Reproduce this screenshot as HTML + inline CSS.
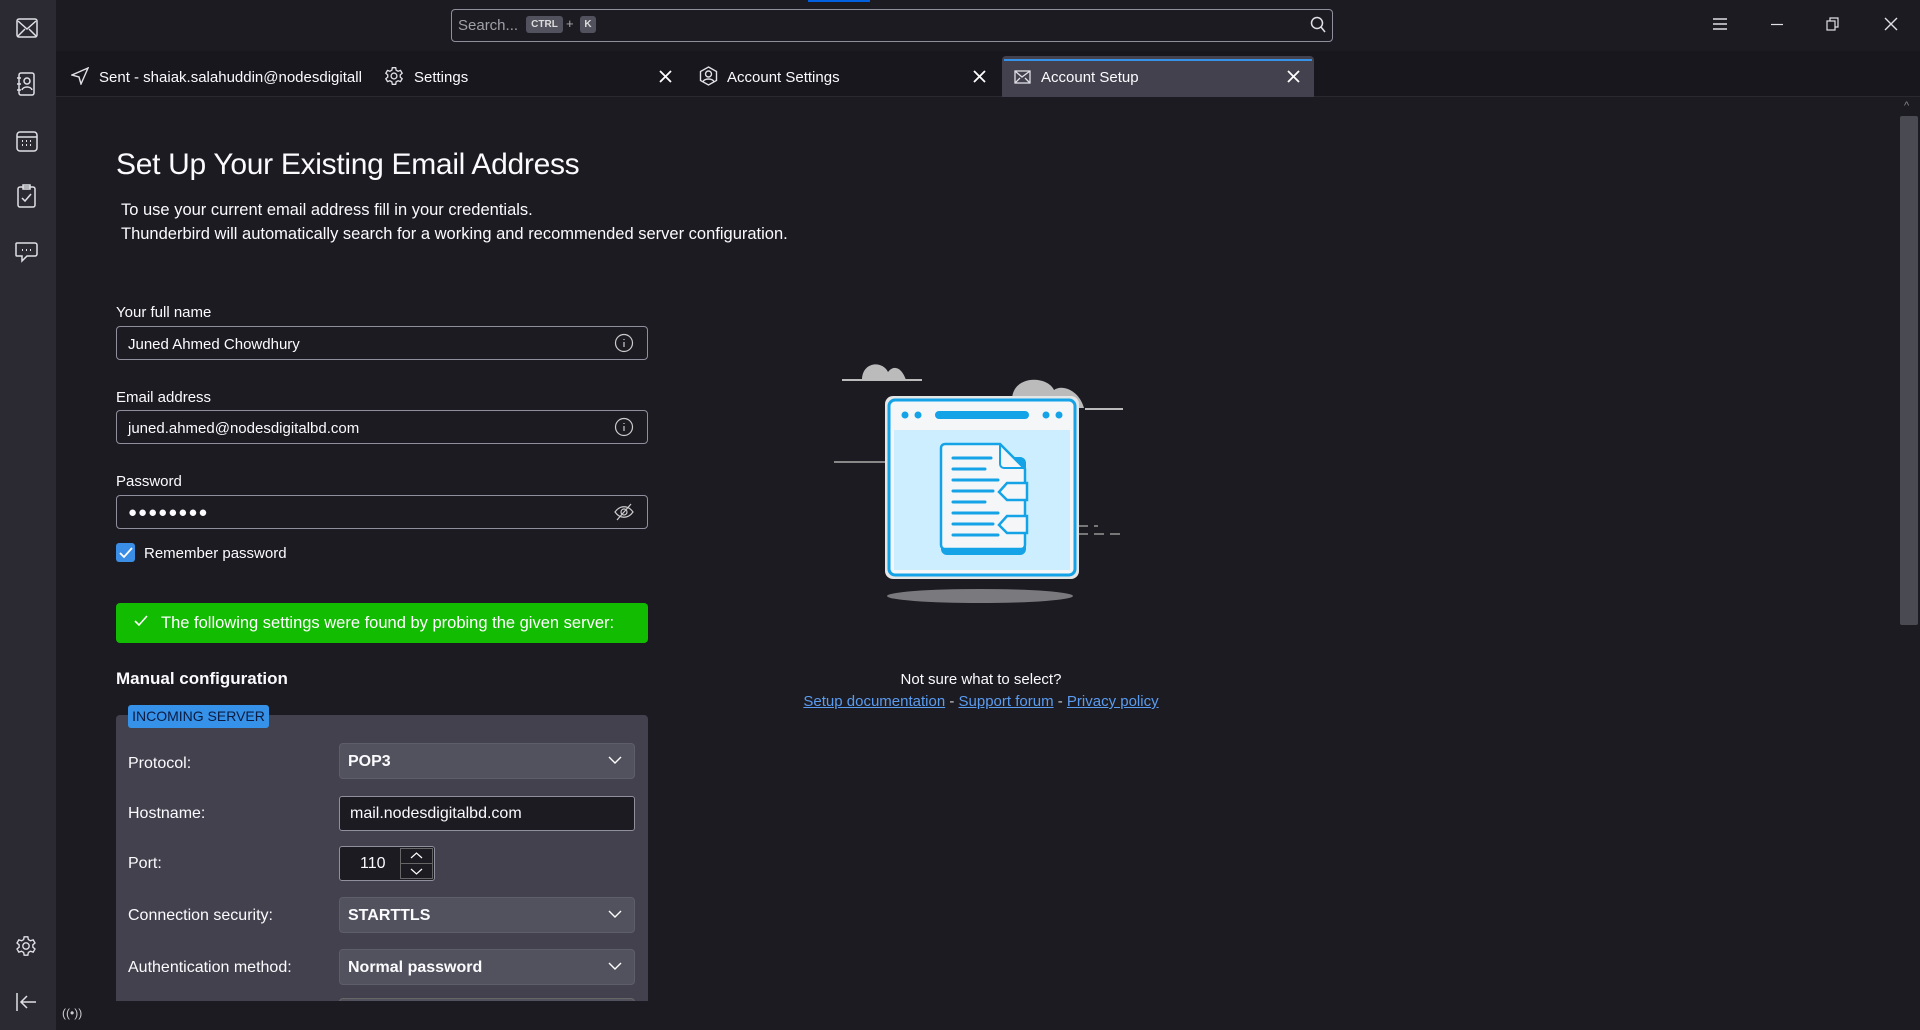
<!DOCTYPE html>
<html><head><meta charset="utf-8"><style>
*{box-sizing:border-box;margin:0;padding:0}
body{width:1920px;height:1030px;background:#1c1b22;font-family:"Liberation Sans",sans-serif;color:#fbfbfe;position:relative;overflow:hidden}
.abs{position:absolute}
.side{left:0;top:0;width:56px;height:1030px;background:#2b2a33}
.top{left:56px;top:0;width:1864px;height:51px;background:#1c1b22}
.tabs{left:56px;top:51px;width:1864px;height:46px;background:#18171d;border-bottom:1px solid #2a2930}
.txt{font-size:15px;color:#fbfbfe;white-space:nowrap}
.input{border:1px solid #8f8f9d;border-radius:4px;background:#1c1b22;height:34px;left:116px;width:532px;font-size:15px;padding:9px 11px}
.lbl{font-size:15px;left:116px}
.sel{left:339px;width:296px;height:36px;background:#52525e;border:1px solid #5e5e6a;border-radius:4px;font-weight:bold;font-size:16px;padding:9px 8px}
.sel svg{position:absolute;right:12px;top:12px}
.rl{left:128px;font-size:16px}
svg{display:block}
</style></head><body>
<div class="abs side"></div>
<svg class="abs" style="left:16px;top:18px" width="22" height="20" viewBox="0 0 22 20" fill="none" stroke="#e0e0e6" stroke-width="1.5"><rect x="1" y="1" width="20" height="18" rx="2"/><path d="M2 3l9 8 9-8M2 18l7-7M20 18l-7-7"/></svg>
<svg class="abs" style="left:16px;top:72px" width="20" height="24" viewBox="0 0 20 24" fill="none" stroke="#e0e0e6" stroke-width="1.5"><rect x="3" y="1" width="15" height="22" rx="2"/><circle cx="11" cy="9" r="3"/><path d="M6 18c1-4 9-4 10 0M1 6h4M1 12h4M1 18h4"/></svg>
<svg class="abs" style="left:16px;top:130px" width="22" height="22" viewBox="0 0 22 22" fill="none" stroke="#e0e0e6" stroke-width="1.5"><rect x="1" y="2" width="20" height="19" rx="3"/><path d="M1 7h20"/><path d="M6 11h1M10 11h1M14 11h1M6 15h1M10 15h1M14 15h1" stroke-width="2"/></svg>
<svg class="abs" style="left:17px;top:184px" width="20" height="24" viewBox="0 0 20 24" fill="none" stroke="#e0e0e6" stroke-width="1.5"><rect x="1" y="3" width="17" height="20" rx="2"/><path d="M6 1h7v4H6zM5 14l3 3 6-7"/></svg>
<svg class="abs" style="left:15px;top:240px" width="24" height="24" viewBox="0 0 24 24" fill="none" stroke="#e0e0e6" stroke-width="1.5"><path d="M2 3h18a2 2 0 012 2v9a2 2 0 01-2 2h-8l-5 5v-5H2a1 1 0 01-1-1V4a1 1 0 011-1z"/><path d="M7 10h1M11 10h1M15 10h1" stroke-width="2"/></svg>
<svg class="abs" style="left:15px;top:935px" width="22" height="22" viewBox="0 0 24 24" fill="none" stroke="#e0e0e6" stroke-width="1.5"><circle cx="12" cy="12" r="3.5"/><path d="M10 2h4l.6 3 2.3 1.3 2.9-1 2 3.4-2.3 2v2.6l2.3 2-2 3.4-2.9-1-2.3 1.3L14 22h-4l-.6-3-2.3-1.3-2.9 1-2-3.4 2.3-2v-2.6l-2.3-2 2-3.4 2.9 1L9.4 5z"/></svg>
<svg class="abs" style="left:16px;top:992px" width="22" height="20" viewBox="0 0 22 20" fill="none" stroke="#e0e0e6" stroke-width="1.5"><path d="M1 1v18M20 10H5M11 4l-6 6 6 6"/></svg>

<div class="abs top"></div>
<div class="abs" style="left:808px;top:0;width:62px;height:2px;background:#0060df"></div>
<div class="abs" style="left:451px;top:9px;width:882px;height:33px;border:1px solid #8f8f9d;border-radius:4px;background:#1c1b22"></div>
<div class="abs txt" style="left:458px;top:17px;color:#a0a0a8">Search...</div>
<div class="abs" style="left:526px;top:16px;width:37px;height:17px;background:#52525e;border-radius:3px;font-size:10px;font-weight:bold;color:#ddd;text-align:center;line-height:17px">CTRL</div>
<div class="abs" style="left:566px;top:16px;font-size:13px;color:#aaa">+</div>
<div class="abs" style="left:580px;top:16px;width:16px;height:17px;background:#52525e;border-radius:3px;font-size:10px;font-weight:bold;color:#ddd;text-align:center;line-height:17px">K</div>
<svg class="abs" style="left:1310px;top:16px" width="16" height="18" viewBox="0 0 16 18" fill="none" stroke="#e0e0e6" stroke-width="1.5"><circle cx="7" cy="7" r="5.5"/><path d="M11 11l4 5"/></svg>
<svg class="abs" style="left:1712px;top:17px" width="16" height="14" fill="none" stroke="#e0e0e6" stroke-width="1.4"><path d="M1 2h14M1 7h14M1 12h14"/></svg>
<svg class="abs" style="left:1770px;top:17px" width="14" height="14" fill="none" stroke="#e0e0e6" stroke-width="1.2"><path d="M1 7.5h12"/></svg>
<svg class="abs" style="left:1826px;top:17px" width="14" height="14" fill="none" stroke="#e0e0e6" stroke-width="1.2"><rect x="1" y="4" width="8" height="9"/><path d="M4 4V1h8v9H9"/></svg>
<svg class="abs" style="left:1884px;top:17px" width="14" height="14" fill="none" stroke="#e0e0e6" stroke-width="1.4"><path d="M1 1l12 12M13 1L1 13"/></svg>

<div class="abs tabs"></div>
<svg class="abs" style="left:71px;top:67px" width="18" height="18" viewBox="0 0 18 18" fill="none" stroke="#e0e0e6" stroke-width="1.4"><path d="M17 1L1 8l7 2 2 7z"/></svg>
<div class="abs txt" style="left:99px;top:69px;width:262px;overflow:hidden">Sent - shaiak.salahuddin@nodesdigitalbd</div>
<svg class="abs" style="left:384px;top:66px" width="20" height="20" viewBox="0 0 24 24" fill="none" stroke="#e0e0e6" stroke-width="1.6"><circle cx="12" cy="12" r="3.5"/><path d="M10 2h4l.6 3 2.3 1.3 2.9-1 2 3.4-2.3 2v2.6l2.3 2-2 3.4-2.9-1-2.3 1.3L14 22h-4l-.6-3-2.3-1.3-2.9 1-2-3.4 2.3-2v-2.6l-2.3-2 2-3.4 2.9 1L9.4 5z"/></svg>
<div class="abs txt" style="left:414px;top:69px">Settings</div>
<svg class="abs" style="left:659px;top:70px" width="13" height="13" fill="none" stroke="#fff" stroke-width="1.8"><path d="M1 1l11 11M12 1L1 12"/></svg>
<svg class="abs" style="left:699px;top:66px" width="19" height="20" viewBox="0 0 19 20" fill="none" stroke="#e0e0e6" stroke-width="1.4"><path d="M9.5 1l8 4.5v9L9.5 19l-8-4.5v-9z"/><circle cx="9.5" cy="8" r="3"/><path d="M4 16c1-4 10-4 11 0"/></svg>
<div class="abs txt" style="left:727px;top:69px">Account Settings</div>
<svg class="abs" style="left:973px;top:70px" width="13" height="13" fill="none" stroke="#fff" stroke-width="1.8"><path d="M1 1l11 11M12 1L1 12"/></svg>
<div class="abs" style="left:1002px;top:56px;width:312px;height:41px;background:#42414d;border-radius:4px 4px 0 0"></div>
<div class="abs" style="left:1004px;top:59px;width:308px;height:2px;background:#3592e8"></div>
<svg class="abs" style="left:1014px;top:70px" width="17" height="15" fill="none" stroke="#e0e0e6" stroke-width="1.3"><rect x="1" y="1" width="15" height="12"/><path d="M1 1l7 6 8-6M1 13l5-5M16 13l-5-5"/></svg>
<div class="abs txt" style="left:1041px;top:69px">Account Setup</div>
<svg class="abs" style="left:1287px;top:70px" width="13" height="13" fill="none" stroke="#fff" stroke-width="1.8"><path d="M1 1l11 11M12 1L1 12"/></svg>

<div class="abs" style="left:1898px;top:98px;width:22px;height:902px;background:#1c1b22"></div>
<div class="abs" style="left:1900px;top:116px;width:18px;height:509px;background:#4a4a52;border-radius:2px"></div>
<div class="abs" style="left:1904px;top:100px;font-size:11px;color:#888">^</div>

<div class="abs" style="left:116px;top:148px;font-size:30px;letter-spacing:-0.3px;color:#fbfbfe">Set Up Your Existing Email Address</div>
<div class="abs" style="left:121px;top:198px;font-size:16.5px;line-height:24px">To use your current email address fill in your credentials.<br>Thunderbird will automatically search for a working and recommended server configuration.</div>

<div class="abs lbl" style="top:304px">Your full name</div>
<div class="abs input" style="top:326px">Juned Ahmed Chowdhury</div>
<svg class="abs" style="left:614px;top:333px" width="20" height="20" fill="none" stroke="#ccc" stroke-width="1.2"><circle cx="10" cy="10" r="8.5"/><path d="M10 9v5M10 6v1"/></svg>
<div class="abs lbl" style="top:389px">Email address</div>
<div class="abs input" style="top:410px">juned.ahmed@nodesdigitalbd.com</div>
<svg class="abs" style="left:614px;top:417px" width="20" height="20" fill="none" stroke="#ccc" stroke-width="1.2"><circle cx="10" cy="10" r="8.5"/><path d="M10 9v5M10 6v1"/></svg>
<div class="abs lbl" style="top:473px">Password</div>
<div class="abs input" style="top:495px;font-size:15px;letter-spacing:1px;padding-top:8px">●●●●●●●●</div>
<svg class="abs" style="left:614px;top:503px" width="20" height="18" fill="none" stroke="#ccc" stroke-width="1.2"><path d="M1 9c5-7 13-7 18 0-5 7-13 7-18 0z"/><circle cx="10" cy="9" r="3"/><path d="M3 17L17 1"/></svg>
<div class="abs" style="left:116px;top:543px;width:19px;height:19px;background:#3a8ee6;border-radius:3px"></div>
<svg class="abs" style="left:119px;top:547px" width="14" height="12" fill="none" stroke="#fff" stroke-width="1.8"><path d="M1 6l4 4 8-9"/></svg>
<div class="abs" style="left:144px;top:545px;font-size:15px">Remember password</div>

<div class="abs" style="left:116px;top:603px;width:532px;height:40px;background:#12bc00;border-radius:4px"></div>
<svg class="abs" style="left:134px;top:615px" width="14" height="12" fill="none" stroke="#fff" stroke-width="1.6"><path d="M1 6l4 4 8-9"/></svg>
<div class="abs" style="left:161px;top:614px;font-size:16.5px;color:#fff">The following settings were found by probing the given server:</div>

<div class="abs" style="left:116px;top:669px;font-size:17px;font-weight:bold">Manual configuration</div>
<div class="abs" style="left:116px;top:715px;width:532px;height:290px;background:#42414d;border-radius:4px"></div>
<div class="abs" style="left:128px;top:705px;width:141px;height:23px;background:#3592e8;border-radius:3px;font-size:14px;color:#0c1a40;text-align:center;line-height:23px">INCOMING SERVER</div>

<div class="abs rl" style="top:755px">Protocol:</div>
<div class="abs sel" style="top:743px">POP3<svg width="14" height="9" fill="none" stroke="#fff" stroke-width="1.4"><path d="M1 1l6 6 6-6"/></svg></div>
<div class="abs rl" style="top:805px">Hostname:</div>
<div class="abs" style="left:339px;top:796px;width:296px;height:35px;background:#1c1b22;border:1px solid #8f8f9d;border-radius:3px;font-size:16px;padding:8px 10px">mail.nodesdigitalbd.com</div>
<div class="abs rl" style="top:855px">Port:</div>
<div class="abs" style="left:339px;top:846px;width:96px;height:35px;background:#1c1b22;border:1px solid #8f8f9d;border-radius:3px;font-size:16px;padding:8px 0 0 20px">110</div>
<div class="abs" style="left:400px;top:848px;width:33px;height:31px;border:1px solid #666;background:#1c1b22"></div>
<div class="abs" style="left:400px;top:863px;width:33px;height:1px;background:#666"></div>
<svg class="abs" style="left:410px;top:851px" width="13" height="26" fill="none" stroke="#fff" stroke-width="1.2"><path d="M1 7l5.5-5 5.5 5M1 18l5.5 5 5.5-5"/></svg>
<div class="abs rl" style="top:907px">Connection security:</div>
<div class="abs sel" style="top:897px">STARTTLS<svg width="14" height="9" fill="none" stroke="#fff" stroke-width="1.4"><path d="M1 1l6 6 6-6"/></svg></div>
<div class="abs rl" style="top:959px">Authentication method:</div>
<div class="abs sel" style="top:949px">Normal password<svg width="14" height="9" fill="none" stroke="#fff" stroke-width="1.4"><path d="M1 1l6 6 6-6"/></svg></div>
<div class="abs" style="left:339px;top:998px;width:296px;height:10px;border:1px solid #666;border-radius:4px;background:#52525e"></div>

<div class="abs" style="left:56px;top:1001px;width:1864px;height:29px;background:#1c1b22"></div>
<div class="abs" style="left:62px;top:1006px;font-size:12px;color:#ccc">((•))</div>

<svg class="abs" style="left:820px;top:350px" width="320" height="260" viewBox="0 0 320 260">
<path d="M22 30h80" stroke="#bbb" stroke-width="2"/>
<path d="M42 30c0-18 20-20 26-8 6-8 14-4 18 8z" fill="#bbb"/>
<path d="M192 50c0-25 35-25 42-10 8-6 25 0 30 18h-72z" fill="#bbb"/>
<path d="M265 59h38" stroke="#bbb" stroke-width="2"/>
<path d="M14 112h60" stroke="#888" stroke-width="2"/>
<path d="M258 176h20M258 184h45" stroke="#777" stroke-width="2" stroke-dasharray="10 6"/>
<ellipse cx="160" cy="246" rx="93" ry="7" fill="#7a7a7e"/>
<rect x="65" y="46" width="194" height="183" rx="8" fill="#e6e6e6"/>
<rect x="69" y="50" width="186" height="175" rx="6" fill="#f4f6f8" stroke="#14a3e6" stroke-width="3"/>
<rect x="74" y="80" width="176" height="140" fill="#cceeff"/>
<circle cx="85" cy="65" r="3.5" fill="#14a3e6"/><circle cx="98" cy="65" r="3.5" fill="#14a3e6"/>
<circle cx="226" cy="65" r="3.5" fill="#14a3e6"/><circle cx="239" cy="65" r="3.5" fill="#14a3e6"/>
<rect x="115" y="61" width="94" height="8" rx="4" fill="#14a3e6"/>
<rect x="121" y="107" width="85" height="98" rx="6" fill="#14a3e6"/>
<path d="M125 94h55l25 25v76a4 4 0 01-4 4h-76a4 4 0 01-4-4V98a4 4 0 014-4z" fill="#f4f6f8" stroke="#14a3e6" stroke-width="2.5"/>
<path d="M180 94v20a4 4 0 004 4h21" fill="none" stroke="#14a3e6" stroke-width="2"/>
<path d="M133 108h38M133 119h32M133 130h45M133 141h40M133 152h32M133 163h45M133 174h40M133 185h45" stroke="#14a3e6" stroke-width="3" stroke-linecap="round"/>
<path d="M187 133h20v17h-20l-8-8z M187 166h20v17h-20l-8-8z" fill="#f4f6f8" stroke="#14a3e6" stroke-width="2.5"/>
</svg>

<div class="abs" style="left:860px;top:671px;width:242px;text-align:center;font-size:15px">Not sure what to select?</div>
<div class="abs" style="left:780px;top:693px;width:402px;text-align:center;font-size:15px;color:#ccc"><span style="color:#5a9cf0;text-decoration:underline">Setup documentation</span> - <span style="color:#5a9cf0;text-decoration:underline">Support forum</span> - <span style="color:#5a9cf0;text-decoration:underline">Privacy policy</span></div>
</body></html>
